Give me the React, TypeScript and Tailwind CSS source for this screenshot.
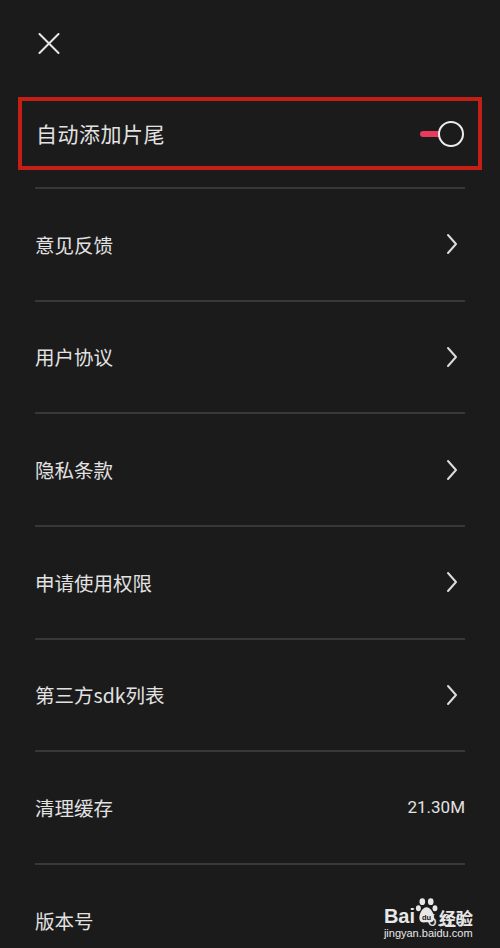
const rows = [
  { label: "意见反馈", kind: "link" },
  { label: "用户协议", kind: "link" },
  { label: "隐私条款", kind: "link" },
  { label: "申请使用权限", kind: "link" },
  { label: "第三方sdk列表", kind: "link" },
  { label: "清理缓存", kind: "value", value: "21.30M" },
  { label: "版本号", kind: "value", value: "6.0.0" },
];

const font = { fontFamily: '"Noto Sans CJK SC", Roboto, sans-serif' };

function Chevron() {
  return (
    <svg width="14" height="22" viewBox="0 0 14 22" fill="none">
      <path d="M3 2 L11 11 L3 20" stroke="#dcdcdc" strokeWidth="2" strokeLinecap="round" strokeLinejoin="round" />
    </svg>
  );
}

function Watermark() {
  return (
    <div className="pointer-events-none absolute right-[27px] bottom-[9px] flex flex-col items-start text-[#e8e8e8]">
      <div className="flex items-end leading-none">
        <span className="text-[20px] font-bold" style={{ fontFamily: '"Liberation Sans", Arial, sans-serif' }}>Bai</span>
        <svg width="24" height="30" viewBox="0 0 24 32" className="-mb-[1px]">
          <ellipse cx="7" cy="5" rx="3" ry="3.6" fill="#e8e8e8" />
          <ellipse cx="16" cy="5" rx="3" ry="3.6" fill="#e8e8e8" />
          <ellipse cx="2.8" cy="12" rx="2.6" ry="3.2" fill="#e8e8e8" />
          <ellipse cx="20.5" cy="12" rx="2.6" ry="3.2" fill="#e8e8e8" />
          <path d="M11.5 11 C7 11 3 19 4 24 C5 28 9 27 11.5 27 C14 27 18 28 19.5 24 C20.5 19 16 11 11.5 11 Z" fill="#e8e8e8" />
          <text x="11.5" y="24" textAnchor="middle" fontSize="8" fontWeight="bold" fill="#1b1b1b" fontFamily="Liberation Sans, sans-serif">du</text>
        </svg>
        <span className="text-[17px] font-bold" style={font}>经验</span>
      </div>
      <span className="mt-[2px] text-[11px] leading-none" style={{ fontFamily: '"Liberation Sans", Arial, sans-serif' }}>
        jingyan.baidu.com
      </span>
    </div>
  );
}

export default function App() {
  return (
    <div className="relative h-[948px] w-[500px] overflow-hidden bg-[#1b1b1b] text-[#e2e2e2]" style={font}>
      {/* header */}
      <div className="h-[97px] pl-[38px] pt-[33px]">
        <svg width="22" height="21" viewBox="0 0 22 21" fill="none">
          <path d="M1.5 1 L20.5 20 M20.5 1 L1.5 20" stroke="#e6e6e6" strokeWidth="2" strokeLinecap="round" />
        </svg>
      </div>

      {/* highlighted toggle row */}
      <div className="mx-[18px] flex h-[73px] items-center justify-between border-4 border-[#c41f17] pl-[14px] pr-[14px]">
        <span className="text-[21px] leading-none tracking-[0.5px]">自动添加片尾</span>
        <div className="relative flex h-[26px] w-[46px] items-center">
          <div className="ml-[2px] h-[6px] w-[26px] rounded-full bg-[#e83a5f]" />
          <div className="absolute right-0 top-0 h-[26px] w-[26px] rounded-full border-2 border-[#ececec] bg-[#1b1b1b]" />
        </div>
      </div>

      <div className="h-[17px]" />

      {/* settings list */}
      <div className="px-[35px]">
        {rows.map((row) => (
          <div key={row.label} className="flex h-[112.7px] flex-col">
            <div className="h-[2px] bg-[#383838]" />
            <div className="flex flex-1 items-center justify-between">
              <span className="text-[19.5px] leading-none">{row.label}</span>
              {row.kind === "link" ? (
                <span className="mr-[6px] flex">
                  <Chevron />
                </span>
              ) : (
                <span className="text-[17px] leading-none" style={{ fontFamily: "Roboto, sans-serif" }}>
                  {row.value}
                </span>
              )}
            </div>
          </div>
        ))}
      </div>

      <Watermark />
    </div>
  );
}
